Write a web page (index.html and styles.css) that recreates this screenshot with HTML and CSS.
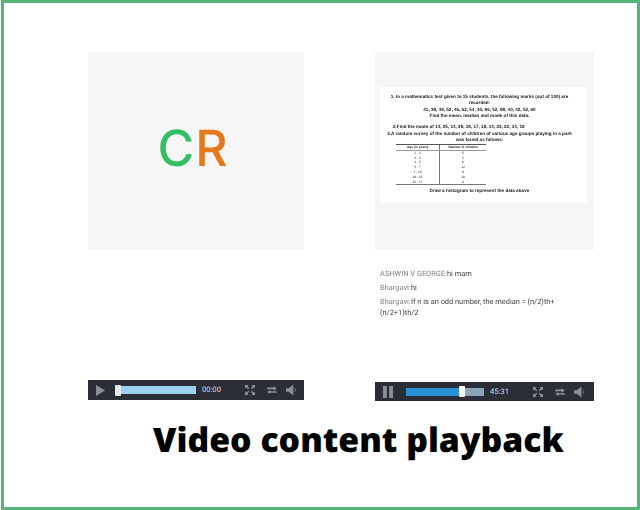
FILE: index.html
```html
<!DOCTYPE html>
<html lang="en">
<head>
<meta charset="utf-8">
<title>Video content playback</title>
<link rel="stylesheet" href="styles.css">
</head>
<body>
<main class="frame">
  <div class="columns">
    <section class="col col-left">
      <div class="panel panel-logo"><span class="logo-c">C</span><span class="logo-r">R</span></div>
      <div class="bar bar-left">
        <svg class="ic-play" width="9" height="11" viewBox="0 0 10 12"><path d="M0 0L10 6L0 12Z"/></svg>
        <div class="track track-left"><span class="thumb thumb-left"></span><span class="buffer"></span></div>
        <span class="time time-left">00:00</span>
        <svg class="ic ic-full" width="10" height="10" viewBox="0 0 12 12"><path d="M0 0h4L3 1.6 5 4 4 5 1.6 3 0 4ZM12 0v4L10.400 3 8 5 7 4 9 1.600 8 0ZM0 12V8l1.600 1L4 7l1 1-2 2.400L4 12ZM12 12H8l1-1.600L7 8l1-1 2.400 2L12 8Z"/></svg>
        <svg class="ic ic-swap" width="10" height="8" viewBox="0 0 12 10"><path d="M0 2h8V0l4 3-4 3V4H0ZM12 6.500H4v-1.500L0 7.500 4 10V8.500h8Z"/></svg>
        <svg class="ic ic-vol" width="11" height="12" viewBox="0 0 12 12"><path d="M0 4h3l5-4v12L3 8H0Z"/><path d="M9.500 3.500q1.500 2.500 0 5" fill="none" stroke="#6d7076"/></svg>
      </div>
    </section>
    <section class="col col-right">
      <div class="panel panel-doc">
        <div class="doc">
          <p class="q q1">1. In a mathematics test given to 15 students, the following marks (out of 100) are recorded:</p>
          <p class="q">41, 39, 48, 52, 46, 62, 54, 40, 96, 52, 98, 40, 42, 52, 60</p>
          <p class="q">Find the mean, median and mode of this data.</p>
          <p class="q q2">2.Find the mode of 14, 25, 14, 28, 18, 17, 18, 14, 23, 22, 14, 18</p>
          <p class="q q3">3.A random survey of the number of children of various age groups playing in a park was found as follows:</p>
          <div class="table">
            <div class="row row-head"><span>Age (in years)</span><span>Number of children</span></div>
            <div class="row"><span>1 - 2</span><span>5</span></div>
            <div class="row"><span>2 - 3</span><span>3</span></div>
            <div class="row"><span>3 - 5</span><span>6</span></div>
            <div class="row"><span>5 - 7</span><span>12</span></div>
            <div class="row"><span>7 - 10</span><span>9</span></div>
            <div class="row"><span>10 - 15</span><span>10</span></div>
            <div class="row"><span>15 - 17</span><span>4</span></div>
          </div>
          <p class="q q4">Draw a histogram to represent the data above</p>
        </div>
      </div>
      <div class="chat">
        <p class="msg"><span class="name">ASHWIN V GEORGE:</span>hi mam</p>
        <p class="msg"><span class="name">Bhargavi:</span>hi</p>
        <p class="msg"><span class="name">Bhargavi:</span>If n is an odd number, the median = (n/2)th+ (n/2+1)th/2</p>
      </div>
      <div class="bar bar-right">
        <svg class="ic-pause" width="10" height="12" viewBox="0 0 10 12"><path d="M0 0h3.800v12H0ZM6.200 0H10v12H6.200Z"/></svg>
        <div class="track track-right"><span class="played"></span><span class="thumb thumb-right"></span><span class="rest"></span></div>
        <span class="time time-right">45:31</span>
        <svg class="ic ic-full" width="10" height="10" viewBox="0 0 12 12"><path d="M0 0h4L3 1.6 5 4 4 5 1.6 3 0 4ZM12 0v4L10.400 3 8 5 7 4 9 1.600 8 0ZM0 12V8l1.600 1L4 7l1 1-2 2.400L4 12ZM12 12H8l1-1.600L7 8l1-1 2.400 2L12 8Z"/></svg>
        <svg class="ic ic-swap" width="10" height="8" viewBox="0 0 12 10"><path d="M0 2h8V0l4 3-4 3V4H0ZM12 6.500H4v-1.500L0 7.500 4 10V8.500h8Z"/></svg>
        <svg class="ic ic-vol" width="11" height="12" viewBox="0 0 12 12"><path d="M0 4h3l5-4v12L3 8H0Z"/><path d="M9.500 3.500q1.500 2.500 0 5" fill="none" stroke="#6d7076"/></svg>
      </div>
    </section>
  </div>
  <h1 class="title">Video content playback</h1>
</main>
</body>
</html>
```
FILE: styles.css
```css
* { box-sizing: border-box; }
html, body { margin: 0; padding: 0; background: #fff; }
body { width: 640px; height: 510px; overflow: hidden; text-rendering: geometricPrecision; }
.frame {
  width: 639px;
  height: 510px;
  margin-left: 1px;
  border: 3px solid #55b77c;
  background: #fff;
}
.columns {
  display: flex;
  gap: 71px;
  padding: 49px 0 0 84px;
}
.col { display: flex; flex-direction: column; }
.col-left { width: 216px; }
.col-right { width: 219px; }
.panel { height: 198px; background: #f6f6f6; }
.panel-logo {
  display: flex;
  justify-content: center;
  align-items: center;
  padding: 0 7px 4px 0;
  font: 500 50px/1 Inter, "Liberation Sans", sans-serif;
}
.logo-c { color: #34bf62; margin-right: 1px; }
.logo-r { color: #e8781c; }
.panel-doc { padding: 35px 7px 0 5px; }
.doc {
  height: 116px;
  background: #fff;
  padding: 7px 13px 0 5px;
  filter: blur(0.45px);
  color: #222;
}
.q {
  margin: 0;
  font: 700 4.6px/6.400px "Liberation Sans", sans-serif;
  text-align: center;
}
.q2 { margin-top: 4px; text-align: left; padding-left: 8px; }
.q3 { margin-top: 1px; }
.q4 { margin-top: 3px; }
.table {
  width: 90px;
  margin-left: 11px;
  border-top: 1px solid #555;
  border-bottom: 1px solid #777;
  font: 400 3.200px/4.800px "Liberation Sans", sans-serif;
}
.row { display: grid; grid-template-columns: 44px 46px; text-align: center; height: 4.800px; }
.row > span:first-child { border-right: 1px solid #777; }
.row-head { height: 6px; font-weight: 700; border-bottom: 1px solid #999; }
.chat {
  margin-top: 18px;
  padding-left: 5px;
  height: 114px;
  font: 400 7.400px/11px Roboto, "Liberation Sans", sans-serif;
  color: #444;
  filter: blur(0.3px);
}
.msg { margin: 0 0 3px; }
.name { color: #999; font-weight: 500; }
.bar {
  display: flex;
  align-items: center;
  background: #2b2e36;
  color: #d8dade;
}
.bar svg { fill: #8d9096; flex: none; filter: blur(0.4px); }
.bar-left { height: 20px; margin-top: 130px; padding-left: 8px; }
.bar-right { height: 19px; padding-left: 8px; }
.track { display: flex; align-items: center; flex: none; }
.thumb { display: block; background: #e8e8e8; flex: none; border-radius: 1px; }
.track-left { margin-left: 10px; }
.thumb-left { width: 6px; height: 11px; }
.buffer { display: block; width: 75px; height: 8px; background: #9bd1ee; }
.track-right { margin-left: 13px; }
.played { display: block; width: 53px; height: 8px; background: #2a93d6; }
.thumb-right { width: 6px; height: 11px; background: #fff; }
.rest { display: block; width: 19px; height: 8px; background: #8da3ba; }
.time { font: 400 7.600px/1 Roboto, "Liberation Sans", sans-serif; }
.time-left { margin-left: 6px; width: 43px; }
.time-right { margin-left: 6px; width: 43px; }
.ic-swap { margin-left: 12px; }
.ic-vol { margin-left: 9px; }
.title {
  margin: 16px 0 0 149px;
  font: 800 33.800px/45px "Open Sans", sans-serif;
  color: #000;
  white-space: nowrap;
}
```
